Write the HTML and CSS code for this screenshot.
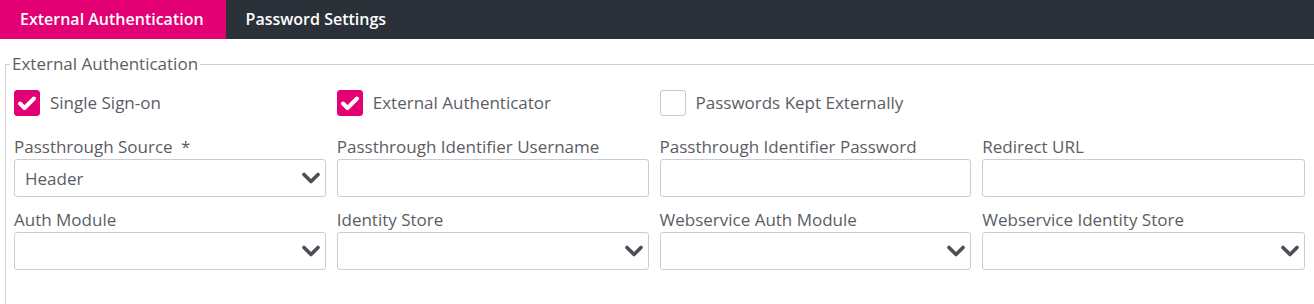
FILE: index.html
```html
<!DOCTYPE html>
<html lang="en">
<head>
  <meta charset="UTF-8">
  <title>External Authentication</title>
  <link rel="stylesheet" href="styles.css">
</head>
<body>
  <div class="tabs">
    <div class="tab active">External Authentication</div>
    <div class="tab">Password Settings</div>
  </div>

  <div class="page">
    <fieldset class="group">
      <legend>External Authentication</legend>

      <div class="grid checks">
        <label class="check"><span class="box on"><svg viewBox="0 0 24 24"><path d="M5 12.5l4.5 4.5L19 7.5" /></svg></span>Single Sign-on</label>
        <label class="check"><span class="box on"><svg viewBox="0 0 24 24"><path d="M5 12.5l4.5 4.5L19 7.5" /></svg></span>External Authenticator</label>
        <label class="check"><span class="box"></span>Passwords Kept Externally</label>
        <div></div>
      </div>

      <div class="grid">
        <div class="field">
          <div class="label">Passthrough Source <span class="req">*</span></div>
          <div class="input select">Header<svg class="chev" viewBox="0 0 18 12"><path d="M2 2.5l7 7 7-7" /></svg></div>
        </div>
        <div class="field">
          <div class="label">Passthrough Identifier Username</div>
          <div class="input"></div>
        </div>
        <div class="field">
          <div class="label">Passthrough Identifier Password</div>
          <div class="input"></div>
        </div>
        <div class="field">
          <div class="label">Redirect URL</div>
          <div class="input"></div>
        </div>

        <div class="field">
          <div class="label">Auth Module</div>
          <div class="input select"><svg class="chev" viewBox="0 0 18 12"><path d="M2 2.5l7 7 7-7" /></svg></div>
        </div>
        <div class="field">
          <div class="label">Identity Store</div>
          <div class="input select"><svg class="chev" viewBox="0 0 18 12"><path d="M2 2.5l7 7 7-7" /></svg></div>
        </div>
        <div class="field">
          <div class="label">Webservice Auth Module</div>
          <div class="input select"><svg class="chev" viewBox="0 0 18 12"><path d="M2 2.5l7 7 7-7" /></svg></div>
        </div>
        <div class="field">
          <div class="label">Webservice Identity Store</div>
          <div class="input select"><svg class="chev" viewBox="0 0 18 12"><path d="M2 2.5l7 7 7-7" /></svg></div>
        </div>
      </div>
    </fieldset>
  </div>
</body>
</html>
```

FILE: styles.css
```css
body {
  margin: 0;
  font-family: "Open Sans", "Liberation Sans", sans-serif;
  color: #5a5e64;
  background-color: #fff;
}
.tabs {
  display: flex;
  height: 39px;
  background-color: #2b3139;
}
.tab {
  padding: 0 22px 0 20px;
  line-height: 39px;
  font-size: 16px;
  font-weight: 600;
  color: #fff;
}
.tab.active {
  background-color: #e20074;
}
.page {
  padding: 15px 0 0 5px;
}
.group {
  margin: 0;
  padding: 0 9px 30px 8px;
  border: 1px solid #cfcfd3;
  border-bottom: none;
  border-right: none;
  min-width: 0;
}
.group legend {
  padding: 0 2px;
  margin-left: -4px;
  font-size: 17px;
  line-height: 20px;
}
.grid {
  display: grid;
  grid-template-columns: repeat(4, 1fr);
}
.checks {
  margin-top: 16px;
  margin-bottom: 21px;
}
.check {
  display: flex;
  align-items: center;
  font-size: 17px;
  line-height: 20px;
}
.box {
  width: 24px;
  height: 24px;
  border: 1px solid #c9c9cc;
  border-radius: 3px;
  margin-right: 10px;
  display: flex;
}
.box.on {
  background-color: #e20074;
  border-color: #e20074;
}
.box svg {
  width: 24px;
  height: 24px;
}
.box path {
  fill: none;
  stroke: #fff;
  stroke-width: 4;
  stroke-linecap: round;
  stroke-linejoin: round;
}
.field {
  padding-right: 11px;
  margin-bottom: 13px;
}
.field:nth-child(4n) {
  padding-right: 0;
}
.label {
  font-size: 17px;
  line-height: 20px;
  margin-bottom: 2px;
}
.req {
  margin-left: 4px;
}
.input {
  height: 36px;
  border: 1px solid #cdcdd0;
  border-radius: 3px;
  display: flex;
  align-items: center;
  padding: 0 10px;
  font-size: 17px;
}
.select {
  justify-content: space-between;
}
.chev {
  width: 18px;
  height: 12px;
  margin-left: auto;
  margin-right: -5px;
}
.chev path {
  fill: none;
  stroke: #4a4f55;
  stroke-width: 3.6;
  stroke-linecap: round;
  stroke-linejoin: round;
}
```
